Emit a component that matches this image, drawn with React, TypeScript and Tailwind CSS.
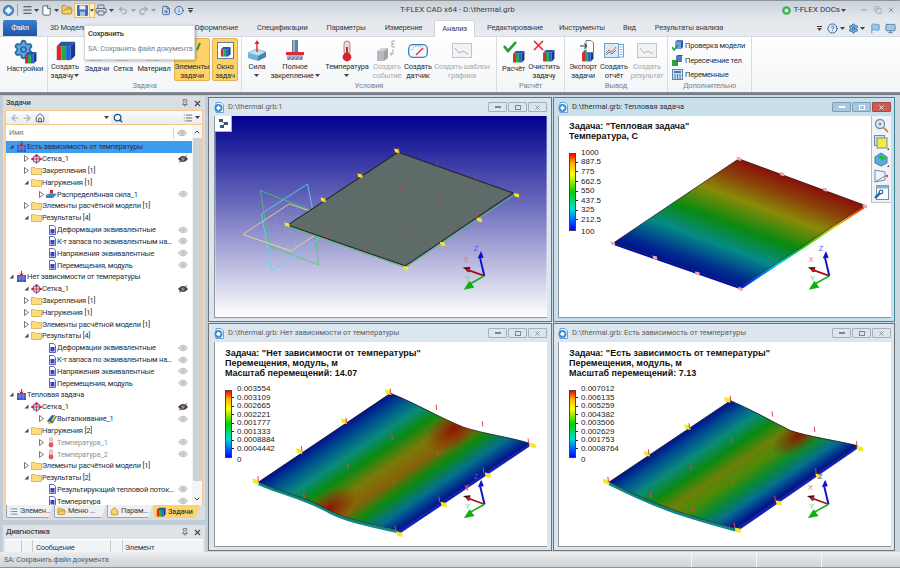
import React from "react";
import { Settings, File, FolderOpen, Printer, Undo2, Redo2, Info, FileSearch, Eye, Pin, X, Home, Search, ArrowLeft, ArrowRight, List, Menu, HelpCircle, Minus, Copy, Flag, Monitor, ChevronUp, ChevronDown } from "lucide-react";

const Caret = ({ className = "" }: { className?: string }) => (
  <svg width="5" height="3" viewBox="0 0 5 3" className={className}><polygon points="0,0 5,0 2.5,3" fill="#444" /></svg>
);

const Cube = ({ s = 22 }: { s?: number }) => (
  <svg width={s} height={s} viewBox="0 0 24 24">
    <polygon points="2,7 7,2 23,2 18,7" fill="#2a56a8" />
    <polygon points="18,7 23,2 23,18 18,23" fill="#173a80" />
    <rect x="2" y="7" width="5.4" height="16" fill="#e0242a" />
    <rect x="7.4" y="7" width="5.3" height="16" fill="#1fae3b" />
    <rect x="12.7" y="7" width="5.3" height="16" fill="#1f5fe0" />
  </svg>
);

const GearCube = () => (
  <div className="relative w-[24px] h-[25px]">
    <Settings size={21} fill="#6aa7dc" stroke="#2c6ea8" strokeWidth={2.2} />
    <div className="absolute right-0 bottom-0"><Cube s={13} /></div>
  </div>
);
const ForceIcon = () => (
  <svg width="20" height="22" viewBox="0 0 20 22">
    <polygon points="1,13 9,9 19,12 11,16" fill="#bfe0f2" stroke="#5a94b8" strokeWidth=".6" />
    <polygon points="1,13 11,16 11,21 1,18" fill="#6fb3d8" />
    <polygon points="11,16 19,12 19,17 11,21" fill="#3f86b4" />
    <line x1="10" y1="12" x2="10" y2="3" stroke="#e02030" strokeWidth="1.4" />
    <polygon points="7.5,4 10,0 12.5,4" fill="#e02030" />
  </svg>
);
const FixIcon = () => (
  <svg width="22" height="22" viewBox="0 0 22 22">
    <rect x="8" y="0" width="6" height="12" fill="#5f7f9c" />
    <rect x="9" y="0" width="2" height="12" fill="#9ab4c9" />
    <rect x="2" y="12" width="18" height="3" fill="#e02a3a" />
    <rect x="3" y="15" width="16" height="5" fill="#9fb2c2" />
    <path d="M4 20l2-3M8 20l2-3M12 20l2-3M16 20l2-3" stroke="#445" strokeWidth=".7" />
  </svg>
);
const ThermoIcon = ({ s = 22, faded = false }: { s?: number; faded?: boolean }) => (
  <svg width={s} height={s} viewBox="0 0 22 22" opacity={faded ? 0.55 : 1}>
    <rect x="8" y="1" width="6" height="14" rx="3" fill="#efd8d8" stroke="#9a6a6a" strokeWidth=".8" />
    <rect x="10" y="7" width="2" height="9" fill="#d0262c" />
    <circle cx="11" cy="17" r="4.4" fill="#d0262c" />
  </svg>
);
const EventIcon = () => (
  <svg width="22" height="22" viewBox="0 0 22 22">
    <polygon points="1,11 5,8 12,8 8,11" fill="#cfd3d6" />
    <polygon points="8,11 12,8 12,18 8,21" fill="#9ea3a8" />
    <rect x="1" y="11" width="7" height="10" fill="#b6babe" />
    <path d="M19 1h-3v6h3M16 4h2.5" stroke="#aaa" strokeWidth="1" fill="none" />
    <path d="M17 9v5h-3m1.5-1.6L14 14l1.5 1.6" stroke="#aaa" strokeWidth="1" fill="none" />
  </svg>
);
const GaugeIcon = () => (
  <svg width="20" height="14" viewBox="0 0 20 14">
    <rect x=".7" y=".7" width="18.6" height="12.6" rx="4" fill="#f2f8fc" stroke="#3f7fb0" strokeWidth="1.3" />
    <path d="M4 6a6.5 6.5 0 0 1 12 0" stroke="#3f7fb0" strokeDasharray="1 1.4" fill="none" />
    <line x1="8" y1="11" x2="15" y2="4" stroke="#d0262c" strokeWidth="1.1" />
  </svg>
);
const ChartIcon = ({ w = 20 }: { w?: number }) => (
  <svg width={w} height="15" viewBox="0 0 20 15">
    <rect x=".5" y=".5" width="19" height="14" fill="#f1f2f3" stroke="#c2c5c9" />
    <polyline points="3,5 7,10 11,8 16,11" stroke="#b0b4b9" fill="none" />
  </svg>
);
const ReportIcon = () => (
  <svg width="20" height="15" viewBox="0 0 20 15">
    <rect x=".5" y=".5" width="14" height="14" fill="#dbeaf7" stroke="#6fa3cf" />
    <polyline points="2,10 5,7 8,9 12,4" stroke="#e0602a" fill="none" />
    <polyline points="2,12 5,9 8,11 12,7" stroke="#3f7fb0" fill="none" />
    <rect x="14.5" y="1.5" width="5" height="12.5" fill="#fff" stroke="#6fa3cf" />
    <path d="M15.5 4h3M15.5 6.5h3M15.5 9h3M15.5 11.5h3" stroke="#6fa3cf" strokeWidth=".7" />
  </svg>
);
const CheckCube = ({ kind }: { kind: "ok" | "no" | "exp" }) => (
  <div className="relative w-[22px] h-[22px]">
    <div className="absolute right-0 bottom-0"><Cube s={13} /></div>
    {kind === "ok" && (
      <svg className="absolute left-0 top-0" width="14" height="12" viewBox="0 0 14 12"><polyline points="1,5 5,10 13,1" stroke="#1f9e2c" strokeWidth="2.6" fill="none" /></svg>
    )}
    {kind === "no" && (
      <svg className="absolute left-0 top-0" width="11" height="11" viewBox="0 0 11 11"><path d="M1 1l9 9M10 1l-9 9" stroke="#e0242a" strokeWidth="1.5" /></svg>
    )}
    {kind === "exp" && (
      <svg className="absolute right-0 top-0" width="14" height="13" viewBox="0 0 14 13">
        <path d="M6 .5h5l2.5 2.5v9.5H6z" fill="#fff" stroke="#6a7f96" />
        <path d="M0 6h6M4 3.5L7 6 4 8.500" stroke="#233" strokeWidth="1" fill="none" />
      </svg>
    )}
  </div>
);
const SmallCheck = () => (
  <svg width="11" height="11" viewBox="0 0 11 11">
    <polygon points="3,2 5,0 11,0 9,2" fill="#4a80c0" /><rect x="3" y="2" width="6" height="7" fill="#6fa3d8" /><polygon points="9,2 11,0 11,7 9,9" fill="#2a56a8" />
    <polyline points="0,7 2,10 6,5" stroke="#1f9e2c" strokeWidth="1.5" fill="none" />
  </svg>
);
const SmallIntersect = () => (
  <svg width="11" height="11" viewBox="0 0 11 11">
    <rect x="0" y="5" width="6" height="6" fill="#1fae3b" /><rect x="4" y="1" width="6" height="6" fill="#4a80c0" /><rect x="4" y="5" width="2" height="2" fill="#e0242a" /><polygon points="4,1 6,0 11,0 10,1" fill="#2a56a8" />
  </svg>
);
const SmallVars = () => (
  <svg width="11" height="11" viewBox="0 0 11 11">
    <rect x=".5" y=".5" width="10" height="10" fill="#cfdfee" stroke="#5a85ad" /><rect x="2" y="2" width="7" height="2" fill="#3f7fb0" /><path d="M3 5v5M5.500 5v5M8 5v5" stroke="#3f7fb0" />
  </svg>
);

type B = { w: string; icon?: React.ReactNode; a: string; b?: string; caret?: "inline" | "below"; off?: boolean; on?: boolean };
const RBtn = ({ w, icon, a, b, caret, off, on }: B) => (
  <div className={`${w} shrink-0 flex flex-col items-center ${on ? "bg-[#fdd367] border border-[#e7b04e] rounded-[2px]" : "border border-transparent"}`}>
    <div className="h-[25px] flex items-center justify-center">{icon}</div>
    <div className={`text-[7.500px] leading-[9px] text-center whitespace-nowrap ${off ? "text-[#a7abb0]" : "text-[#2a2f35]"}`}>
      <div>{a}</div>
      {b && (
        <div className="flex items-center justify-center gap-[1px]">
          {b}
          {caret === "inline" && <Caret />}
        </div>
      )}
      {caret === "below" && <div className="flex justify-center h-[9px] items-center"><Caret /></div>}
    </div>
  </div>
);
const Group = ({ w, label, pl, children }: { w: string; label?: string; pl?: string; children: React.ReactNode }) => (
  <div className={`${w} shrink-0 flex flex-col border-r border-[#d9dde1]`}>
    <div className={`h-[44px] pt-[1px] flex ${pl ?? ""}`}>{children}</div>
    <div className="h-[11px] text-[7.500px] leading-[10px] text-center text-[#7d848b]">{label}</div>
  </div>
);

const TopIcon = ({ children, w = "w-[10px]" }: { children: React.ReactNode; w?: string }) => (
  <div className={`${w} shrink-0 h-[14px] flex items-center justify-center`}>{children}</div>
);

const TitleBar = () => (
  <div className="h-[19px] shrink-0 flex items-center bg-gradient-to-b from-[#c9d1d9] to-[#e4e8ed] border-t border-[#8d9296] pl-[3px] pr-[5px] relative">
    <svg width="11" height="11" viewBox="0 0 11 11"><circle cx="5.500" cy="5.500" r="5" fill="#4f97d8" stroke="#2a6aa8" /><polygon points="5.500,2 9,5.500 5.500,9 2,5.500" fill="#fff" /></svg>
    <div className="w-px h-[12px] bg-[#9aa2aa] ml-[3px] mr-[4px]" />
    <TopIcon w="w-[11px]"><Menu size={12} color="#30465c" strokeWidth={2.4} /></TopIcon>
    <Caret className="ml-[1px] mr-[2px]" />
    <TopIcon w="w-[11px]"><File size={11} color="#4b5b6b" fill="#fff" /></TopIcon>
    <Caret className="ml-[2px] mr-[2px]" />
    <TopIcon w="w-[12px]"><FolderOpen size={12} color="#b88a26" fill="#f5cf6a" /></TopIcon>
    <div className="ml-[1px] flex h-[15px] items-center bg-[#fdf1c5] border border-[#e7c06a]">
      <div className="w-[14px] flex justify-center">
        <svg width="11" height="11" viewBox="0 0 11 11"><rect width="11" height="11" rx="1" fill="#3d6cc4" /><rect x="2.500" y="0.500" width="6" height="4" fill="#e6edf7" /><rect x="3" y="6.500" width="5" height="4.500" fill="#a8c0e6" /></svg>
      </div>
      <div className="w-[5px] h-full border-l border-[#e7c06a] flex items-center justify-center"><Caret /></div>
    </div>
    <TopIcon w="w-[12px]"><Printer size={12} color="#5c6c7c" /></TopIcon>
    <Caret className="ml-[2px] mr-[4px]" />
    <TopIcon w="w-[10px]"><Undo2 size={11} color="#9aa6b2" strokeWidth={2.6} /></TopIcon>
    <Caret className="ml-[3px] mr-[2px] opacity-40" />
    <TopIcon w="w-[11px]"><Redo2 size={11} color="#9aa6b2" strokeWidth={2.6} /></TopIcon>
    <Caret className="ml-[2px] mr-[5px] opacity-40" />
    <TopIcon w="w-[10px]"><FileSearch size={11} color="#2a5a98" /></TopIcon>
    <div className="ml-[3px]"><TopIcon w="w-[10px]"><Info size={11} color="#1f5fa8" /></TopIcon></div>
    <div className="ml-[4px] flex flex-col items-center gap-[1px]"><div className="w-[5px] h-px bg-[#333]" /><Caret /></div>
    <div className="flex-1 text-center text-[8px] tracking-normal text-[#3b4046] pr-[60px]">T-FLEX CAD x64 - D:\thermal.grb</div>
    <svg width="9" height="9" viewBox="0 0 9 9"><circle cx="4.500" cy="4.500" r="4.300" fill="#35b54a" /><circle cx="4.500" cy="4.500" r="2" fill="#e4f5e6" /></svg>
    <span className="ml-[3px] text-[8px] tracking-normal text-[#30363c]">T-FLEX DOCs</span>
    <Caret className="ml-[1px] mr-[14px]" />
    <Minus size={8} color="#8f969c" strokeWidth={3} />
    <Copy size={8} color="#8f969c" className="ml-[6px]" />
    <X size={8} color="#8f969c" className="ml-[5px]" strokeWidth={3} />
  </div>
);

const tabs = ["Спецификации", "Параметры", "Измерение"];
const TabsRow = () => (
  <div className="h-[17px] shrink-0 flex items-end bg-gradient-to-b from-[#e4e8ed] to-[#e8ecf1] pl-[3px] pr-[4px] text-[7.500px] text-[#3a4047] relative">
    <div className="w-[34px] h-[16px] bg-gradient-to-b from-[#3a7fd0] to-[#1f55a8] text-white text-center leading-[15px] rounded-t-[2px]">Файл</div>
    <div className="flex items-center gap-[19px] h-[16px] ml-[13px] whitespace-nowrap">
      <span className="w-[40px]">3D Модель</span>
      <span className="w-[60px]" />
      <span className="w-[50px] text-right">Оформление</span>
      {tabs.map((t) => <span key={t}>{t}</span>)}
      <span className="h-[17px] -mx-[7px] px-[7px] bg-white border border-b-0 border-[#cfd4d9] leading-[16px] rounded-t-[2px]">Анализ</span>
      <span>Редактирование</span>
      <span className="-ml-[3px]">Инструменты</span>
      <span className="-ml-[1px]">Вид</span>
      <span>Результаты анализа</span>
    </div>
    <div className="flex-1" />
    <div className="h-[16px] flex items-center">
      <div className="flex flex-col items-center gap-[1px]"><div className="w-[5px] h-px bg-[#333]" /><Caret /></div>
      <HelpCircle size={11} color="#1f5fa8" className="ml-[5px]" />
      <Caret className="ml-[2px] mr-[3px]" />
      <Settings size={11} color="#2a6aa8" fill="#7db3e0" />
      <Caret className="ml-[1px] mr-[5px]" />
      <Flag size={11} color="#4f97d8" fill="#9cc7ea" />
      <Monitor size={11} color="#4f7fa8" fill="#a8c7e0" className="ml-[4px]" />
    </div>
  </div>
);

const Ribbon = () => (
  <div className="h-[56px] shrink-0 flex bg-gradient-to-b from-white to-[#f3f5f8] pl-[3px] border-t border-[#d4d9de]">
    <Group w="w-[45px]">
      <RBtn w="w-[44px]" a="Настройки" icon={<GearCube />} />
    </Group>
    <Group w="w-[194px]" label="Задача">
      <RBtn w="w-[34px]" a="Создать" b="задачу" caret="inline" icon={<Cube s={21} />} />
      <RBtn w="w-[30px]" a="Задачи" icon={<Cube s={18} />} />
      <RBtn w="w-[22px]" a="Сетка" icon={<Cube s={18} />} />
      <RBtn w="w-[40px]" a="Материал" icon={<Cube s={18} />} />
      <RBtn w="w-[36px]" on a="Элементы" b="задачи" icon={<svg width="26" height="22" viewBox="0 0 26 22"><path d="M18 10l3-7" stroke="#2f9e3c" strokeWidth="2" /></svg>} />
      <div className="w-[2px] shrink-0" />
      <RBtn w="w-[26px]" on a="Окно" b="задач" icon={
        <div className="w-[17px] h-[17px] bg-white border border-[#5a7fa8] flex items-end justify-center pb-[1px]"><Cube s={11} /></div>
      } />
    </Group>
    <Group w="w-[255px]" label="Условия">
      <RBtn w="w-[30px]" a="Сила" caret="below" icon={<ForceIcon />} />
      <RBtn w="w-[46px]" a="Полное" b="закрепление" caret="inline" icon={<FixIcon />} />
      <div className="w-[4px] shrink-0" />
      <RBtn w="w-[50px]" a="Температура" caret="below" icon={<ThermoIcon />} />
      <RBtn w="w-[30px]" off a="Создать" b="событие" icon={<EventIcon />} />
      <RBtn w="w-[32px]" a="Создать" b="датчик" icon={<GaugeIcon />} />
      <RBtn w="w-[56px]" off a="Создать шаблон" b="графика" icon={<ChartIcon />} />
    </Group>
    <Group w="w-[68px]" label="Расчёт">
      <RBtn w="w-[33px]" a="Расчёт" icon={<CheckCube kind="ok" />} />
      <RBtn w="w-[28px]" a="Очистить" b="задачу" icon={<CheckCube kind="no" />} />
    </Group>
    <Group w="w-[103px]" pl="pl-[3px]" label="Вывод">
      <RBtn w="w-[30px]" a="Экспорт" b="задачи" icon={<CheckCube kind="exp" />} />
      <RBtn w="w-[32px]" a="Создать" b="отчёт" icon={<ReportIcon />} />
      <RBtn w="w-[34px]" off a="Создать" b="результат" icon={<ChartIcon />} />
    </Group>
    <Group w="w-[84px]" label="Дополнительно">
      <div className="pl-[4px] pt-[2px] flex flex-col gap-[3.500px] text-[7.500px] leading-[11px] text-[#2a2f35] whitespace-nowrap">
        {[[<SmallCheck />, "Проверка модели"], [<SmallIntersect />, "Пересечение тел"], [<SmallVars />, "Переменные"]].map(([ic, t], i) => (
          <div key={i} className="flex items-center gap-[2px]"><span className="w-[11px] flex">{ic}</span>{t}</div>
        ))}
      </div>
    </Group>
  </div>
);

const Tooltip = () => (
  <div className="absolute left-[84px] top-[25px] w-[111px] h-[35px] bg-white border border-[#d8dbde] shadow-[1px_1px_3px_rgba(0,0,0,.3)] z-20 px-[3px] pt-[3px] text-[7.500px] leading-[10px] whitespace-nowrap">
    <div className="text-[#333] font-medium">Сохранить</div>
    <div className="mt-[5px] text-[#7d838a]">SA: Сохранить файл документа</div>
  </div>
);

type K = "root" | "mesh" | "folder" | "force" | "doc" | "thermo" | "extrude";
type R = { l: 0 | 1 | 2 | 3; k: K; t: string; arrow?: "open" | "closed"; eye?: "on" | "off"; sel?: boolean; dim?: boolean };

const TreeIcon = ({ k }: { k: K }) => {
  if (k === "folder") return <svg width="11" height="9" viewBox="0 0 11 9"><path d="M.5 1.500h3.500l1 1h5.500v6H.5z" fill="#fbdc80" stroke="#cfa33f" strokeWidth=".7" /></svg>;
  if (k === "doc") return <svg width="7" height="10" viewBox="0 0 7 10" className="ml-[3px]"><path d="M.5.5h4l2 2v7h-6z" fill="#fff" stroke="#3b3fb0" strokeWidth=".8" /><rect x="1.500" y="4" width="4" height="4.500" fill="#3b3fc8" /></svg>;
  if (k === "mesh") return <svg width="11" height="10" viewBox="0 0 11 10"><circle cx="5.500" cy="5" r="3.600" fill="#bcd0f0" stroke="#2a3fc0" strokeWidth=".8" /><path d="M0 5h11M5.500 0v10" stroke="#d02030" strokeWidth=".7" /><circle cx="5.500" cy="1.500" r="1.200" fill="#d02030" /><circle cx="1.500" cy="5" r="1.200" fill="#d02030" /><circle cx="9.500" cy="5" r="1.200" fill="#d02030" /></svg>;
  if (k === "force") return <svg width="11" height="10" viewBox="0 0 11 10"><polygon points="0,6 5,4 11,5 7,9 0,9" fill="#3f86c8" /><rect x="4" y="1" width="3" height="3" fill="#d02030" /></svg>;
  if (k === "extrude") return <svg width="11" height="10" viewBox="0 0 11 10"><polygon points="1,7 6,1 11,2 7,9 3,10" fill="#2a5fc0" /><polygon points="1,7 7,9 3,10" fill="#f0d020" /><polygon points="8,2 10,2 7,7 5,7" fill="#f0d020" /></svg>;
  if (k === "thermo") return <svg width="10" height="11" viewBox="0 0 10 11"><rect x="3.500" y="0.500" width="3" height="7" rx="1.500" fill="#f0d0d0" stroke="#c08080" strokeWidth=".5" /><circle cx="5" cy="8" r="2.400" fill="#d85a60" /></svg>;
  return <svg width="11" height="11" viewBox="0 0 11 11"><rect x="1" y="4" width="9" height="7" fill="#3f4fc0" /><path d="M1 6h9M1 8h9M4 4v7M7 4v7" stroke="#9fb0f0" strokeWidth=".5" /><path d="M5.500 0v4M3.800 2.500L5.500 5l1.700-2.500" stroke="#d02030" strokeWidth="1" fill="none" /></svg>;
};

const Arrow = ({ a }: { a?: "open" | "closed" }) => {
  if (a === "closed") return <svg width="5" height="7" viewBox="0 0 5 7"><polygon points=".5,.5 4.500,3.500 .5,6.500" fill="#fff" stroke="#555" strokeWidth=".8" /></svg>;
  if (a === "open") return <svg width="5" height="5" viewBox="0 0 5 5"><polygon points="4.500,.5 4.500,4.500 .5,4.500" fill="#444" /></svg>;
  return null;
};

const EyeI = ({ v }: { v?: "on" | "off" }) => {
  if (v === "on") return <Eye size={10} color="#aab0b6" fill="#d8dbde" strokeWidth={1.6} />;
  if (v === "off")
    return (
      <svg width="10" height="10" viewBox="0 0 10 10"><path d="M0 5c3-4 7-4 10 0-3 4-7 4-10 0z" fill="#444" /><circle cx="5" cy="5" r="1.500" fill="#bbb" /><line x1="1" y1="8.500" x2="9" y2="1.500" stroke="#e02030" strokeWidth="1" /></svg>
    );
  return null;
};

const results = (a: string[]): R[] => a.map((t) => ({ l: 3, k: "doc", t, eye: "on" }));
const four = ["Деформации эквивалентные", "К-т запаса по эквивалентным напряжениям", "Напряжения эквивалентные", "Перемещения, модуль"];
const rows: R[] = [
  { l: 0, k: "root", t: "Есть зависимость от температуры", arrow: "open", sel: true },
  { l: 1, k: "mesh", t: "Сетка_1", arrow: "closed", eye: "off" },
  { l: 1, k: "folder", t: "Закрепления [1]", arrow: "closed" },
  { l: 1, k: "folder", t: "Нагружения [1]", arrow: "open" },
  { l: 2, k: "force", t: "Распределённая сила_1", arrow: "closed", eye: "on" },
  { l: 1, k: "folder", t: "Элементы расчётной модели [1]", arrow: "closed" },
  { l: 1, k: "folder", t: "Результаты [4]", arrow: "open" },
  ...results(four),
  { l: 0, k: "root", t: "Нет зависимости от температуры", arrow: "open" },
  { l: 1, k: "mesh", t: "Сетка_1", arrow: "open", eye: "off" },
  { l: 1, k: "folder", t: "Закрепления [1]", arrow: "closed" },
  { l: 1, k: "folder", t: "Нагружения [1]", arrow: "closed" },
  { l: 1, k: "folder", t: "Элементы расчётной модели [1]", arrow: "closed" },
  { l: 1, k: "folder", t: "Результаты [4]", arrow: "open" },
  ...results(four),
  { l: 0, k: "root", t: "Тепловая задача", arrow: "open" },
  { l: 1, k: "mesh", t: "Сетка_1", arrow: "open", eye: "off" },
  { l: 2, k: "extrude", t: "Выталкивание_1", arrow: "closed", eye: "on" },
  { l: 1, k: "folder", t: "Нагружения [2]", arrow: "open" },
  { l: 2, k: "thermo", t: "Температура_1", arrow: "closed", eye: "on", dim: true },
  { l: 2, k: "thermo", t: "Температура_2", arrow: "closed", eye: "on", dim: true },
  { l: 1, k: "folder", t: "Элементы расчётной модели [1]", arrow: "closed" },
  { l: 1, k: "folder", t: "Результаты [2]", arrow: "open" },
  ...results(["Результирующий тепловой поток, модуль", "Температура"]),
];
const pad = ["pl-[3px]", "pl-[18px]", "pl-[33px]", "pl-[33px]"];

const TreeRow = ({ r }: { r: R }) => (
  <div className={`h-[11.820px] flex items-center pr-[4px] ${pad[r.l]} ${r.sel ? "bg-[#3d9cf0]" : ""}`}>
    <div className="w-[5px] mr-[2px] flex justify-center shrink-0"><Arrow a={r.arrow} /></div>
    <div className="w-[11px] shrink-0 flex items-center"><TreeIcon k={r.k} /></div>
    <div className={`flex-1 min-w-0 truncate text-[7.500px] leading-[11px] ${r.dim ? "text-[#8f959b]" : "text-[#2a2f35]"}`}>{r.t}</div>
    <div className="w-[10px] ml-[3px] shrink-0 flex"><EyeI v={r.eye} /></div>
  </div>
);

const PanelHead = ({ t }: { t: string }) => (
  <div className="h-[14px] shrink-0 flex items-center px-[3px] text-[7.500px] font-medium text-[#3a4047]">
    <span className="flex-1">{t}</span>
    <Pin size={8} color="#444" className="mr-[4px]" />
    <X size={9} color="#444" strokeWidth={3} />
  </div>
);

const TasksPanel = () => (
  <div className="mt-[1px] h-[424px] shrink-0 flex flex-col bg-[#d9dee3]">
    <PanelHead t="Задачи" />
    <div className="flex-1 min-h-0 mx-[1px] border-x-2 border-[#f8cf98] flex flex-col">
      <div className="h-[15px] shrink-0 flex items-center bg-gradient-to-b from-[#fafbfc] to-[#e9ecef] border-y border-[#f8c888] pl-[4px] pr-[2px] gap-[2px]">
        <ArrowLeft size={10} color="#aab4be" strokeWidth={3} />
        <ArrowRight size={10} color="#aab4be" strokeWidth={3} />
        <Home size={10} color="#30465c" className="ml-[1px]" />
        <div className="ml-[2px] w-[62px] h-[12px] bg-white flex items-center justify-end pr-[2px]"><Caret /></div>
        <Search size={10} color="#1f4f88" strokeWidth={3} />
        <div className="flex-1" />
        <List size={10} color="#555" /><Caret />
      </div>
      <div className="flex-1 min-h-0 flex bg-white">
        <div className="flex-1 min-w-0 flex flex-col">
          <div className="h-[16px] shrink-0 flex items-center pl-[3px] pr-[5px] text-[7.500px] text-[#7d838a]">
            <span className="flex-1">Имя</span>
            <div className="w-px h-[12px] bg-[#d6d9dc] mr-[3px]" />
            <Eye size={10} color="#aab0b6" fill="#d8dbde" />
          </div>
          <div className="flex-1 min-h-0 overflow-hidden">
            {rows.map((r, i) => <TreeRow key={i} r={r} />)}
          </div>
        </div>
        <div className="w-[10px] shrink-0 flex flex-col bg-[#f4f5f6] items-center">
          <ChevronUp size={8} color="#444" strokeWidth={3} className="mt-[3px] mb-[2px]" />
          <div className="w-[9px] h-[343px] bg-[#cdd1d5] rounded-[1px]" />
          <div className="flex-1" />
          <ChevronDown size={8} color="#444" strokeWidth={3} className="mb-[2px]" />
        </div>
      </div>
    </div>
    <div className="h-[15px] shrink-0 flex items-start gap-[1px] pl-[3px] text-[7.500px] text-[#3a4047] whitespace-nowrap">
      {[
        ["w-[47px]", "Элемен...", <List size={9} color="#3f6f9f" />],
        ["w-[52px]", "Меню ...", <FolderOpen size={9} color="#b88a26" fill="#f5cf6a" />],
        ["w-[46px]", "Парам...", <Home size={9} color="#b88a26" fill="#f5cf6a" />],
      ].map(([w, t, ic], i) => (
        <div key={i} className={`${w} h-[13px] flex items-center gap-[2px] pl-[2px] bg-[#eef0f3] border-b border-l border-[#9aa2aa] rounded-bl-[2px] [clip-path:polygon(0_0,100%_0,calc(100%-5px)_100%,0_100%)]`}>{ic}{t}</div>
      ))}
      <div className="w-[46px] h-[13px] flex items-center gap-[2px] pl-[2px] bg-[#fdd367] font-medium rounded-bl-[2px] [clip-path:polygon(0_0,100%_0,calc(100%-5px)_100%,0_100%)]"><Cube s={10} />Задачи</div>
    </div>
  </div>
);

const Diagnostics = () => (
  <div className="mt-[5px] flex-1 min-h-0 overflow-hidden bg-[#dfe3e7] flex flex-col">
    <PanelHead t="Диагностика" />
    <div className="h-[13px] shrink-0 mx-[2px] flex bg-[#f1f3f5] text-[7.500px] leading-[15px] text-[#3a4047] border-t border-[#fff]">
      <div className="w-[17px] border-r border-[#c4c9ce]" />
      <div className="w-[11px] border-r border-[#c4c9ce]" />
      <div className="w-[78px] border-r border-[#c4c9ce] pl-[3px]">Сообщение</div>
      <div className="w-[12px] border-r border-[#c4c9ce]" />
      <div className="flex-1 pl-[2px]">Элемент</div>
    </div>
  </div>
);

const WinBtn = ({ kind, active }: { kind: "min" | "max" | "close"; active?: boolean }) => {
  const bg = active ? (kind === "close" ? "bg-[#cf5a52] border-[#a84840]" : "bg-[#a9c8de] border-[#7f9fb8]") : "bg-[#dde5ec] border-[#a5b0ba]";
  const c = active ? "#fff" : "#7d878f";
  return (
    <div className={`w-[19px] h-[10px] border ${bg} rounded-[1px] flex items-center justify-center`}>
      {kind === "min" && <div className="w-[6px] h-[2px] border" style={{ borderColor: c }} />}
      {kind === "max" && <div className="w-[6px] h-[5px] border" style={{ borderColor: c }} />}
      {kind === "close" && <X size={7} color={c} strokeWidth={3} />}
    </div>
  );
};

const DocBadge = () => (
  <svg width="10" height="11" viewBox="0 0 10 11" className="shrink-0"><path d="M2 .5h5l2.500 2.500v7.500H2z" fill="#fff" stroke="#6fa3d8" /><circle cx="4.500" cy="6" r="4" fill="#3d8cd8" /><polygon points="4.500,3.500 7,6 4.500,8.500 2,6" fill="#fff" /></svg>
);

const MdiWindow = ({ title, active, pad, children }: { title: string; active?: boolean; pad: string; children: React.ReactNode }) => (
  <div className={`min-h-0 flex flex-col border ${active ? "border-[#3f8796] bg-[#c8dfec]" : "border-[#6d7378] bg-[#dbe6ef]"}`}>
    <div className={`h-[18px] shrink-0 flex items-center gap-[2px] ${pad}`}>
      <DocBadge />
      <span className={`flex-1 text-[7.500px] tracking-normal pl-[2px] truncate ${active ? "text-[#2c3238]" : "text-[#5a6066]"}`}>{title}</span>
      <div className="flex gap-[1px]">
        <WinBtn kind="min" active={active} />
        <WinBtn kind="max" active={active} />
        <WinBtn kind="close" active={active} />
      </div>
    </div>
    <div className={`flex-1 min-h-0 flex pb-[3px] ${pad}`}>
      <div className="relative flex-1 min-w-0 bg-white border-l border-b border-[#8f969c] overflow-hidden">{children}</div>
    </div>
  </div>
);

const Axes = ({ x, y, zy = 470 }: { x: number; y: number; zy?: number }) => (
  <g>
    <line x1={x} y1={y} x2={x - 13} y2={zy + 20} stroke="#1010d0" strokeWidth="6" />
    <polygon points={`${x - 20},${zy + 22} ${x - 10},${zy} ${x - 2},${zy + 20}`} fill="#1010d0" />
    <line x1={x} y1={y} x2={x - 50} y2={y - 18} stroke="#a01018" strokeWidth="5" />
    <polygon points={`${x - 46},${y - 12} ${x - 65},${y - 25} ${x - 42},${y - 27}`} fill="#301010" />
    <circle cx={x - 48} cy={y - 17} r="6" fill="#d01018" />
    <line x1={x} y1={y} x2={x - 45} y2={y + 25} stroke="#10b010" strokeWidth="5" />
    <polygon points={`${x - 45},${y + 15} ${x - 62},${y + 42} ${x - 30},${y + 35}`} fill="#10b010" />
    <text x={x - 32} y={zy - 1} fontSize="22" fill="#5058f0" fontFamily="Liberation Sans">Z</text>
    <text x={x - 62} y={y - 42} fontSize="22" fill="#ef6a70" fontFamily="Liberation Sans">X</text>
    <text x={x - 58} y={y + 14} fontSize="22" fill="#60d870" fontFamily="Liberation Sans">Y</text>
  </g>
);

type P = [number, number];
const Diamonds = ({ pts, fill = "#f4e820", s = 1 }: { pts: P[]; fill?: string; s?: number }) => (
  <g>
    {pts.map(([x, y], i) => (
      <polygon key={i} points={`${x - 8 * s},${y - 7 * s} ${x + 7 * s},${y - 4 * s} ${x + 8 * s},${y + 7 * s} ${x - 5 * s},${y + 4 * s}`} fill={fill} />
    ))}
  </g>
);
const Ticks = ({ pts, w = 3, c = "#e04050" }: { pts: P[]; w?: number; c?: string }) => (
  <g>
    {pts.map(([x, y], i) => <line key={i} x1={x - 1} y1={y - 8} x2={x + 1} y2={y + 8} stroke={c} strokeWidth={w} />)}
  </g>
);

const Model = () => (
  <svg viewBox="27 63 999 606" className="absolute inset-0 w-full h-full">
    <defs>
      <linearGradient id="sky" x1="0" y1="0" x2="0" y2="1">
        <stop offset="0" stopColor="#00008e" /><stop offset=".45" stopColor="#6e6ebd" /><stop offset="1" stopColor="#ffffff" />
      </linearGradient>
    </defs>
    <rect x="27" y="63" width="999" height="606" fill="url(#sky)" />
    <polygon points="163,288 322,350 338,512 190,455" fill="none" stroke="#3fd060" strokeWidth="2.500" />
    <polygon points="305,268 338,435 198,530 166,358" fill="none" stroke="#4fdcf0" strokeWidth="2.500" />
    <polygon points="250,328 395,378 255,470 110,420" fill="none" stroke="#f0e080" strokeWidth="2.500" />
    <g stroke="#7fd8b0" strokeWidth="2" strokeDasharray="2 10" fill="none" opacity=".8">
      <path d="M200 310l25 170M225 320l25 170M250 330l25 170M275 340l25 170M190 360l130 50M190 385l130 50M190 410l130 50M190 435l130 50" />
    </g>
    <polygon points="245,392 578,172 925,295 600,515" fill="#5f6b68" stroke="#25282c" strokeWidth="3.500" />
    <polyline points="248,396 600,520 930,300" fill="none" stroke="#38d048" strokeWidth="2.500" />
    <Diamonds pts={[[243, 391], [352, 316], [463, 243], [574, 168], [935, 302], [823, 376], [712, 449], [601, 522]]} />
    <Ticks pts={[[469, 238], [358, 311], [696, 206], [810, 247], [584, 280], [699, 321], [474, 352], [589, 395], [362, 425], [477, 466], [815, 362], [704, 435], [593, 508], [925, 287], [580, 165]]} w={2} c="#c84050" />
    <Axes x={838} y={545} />
  </svg>
);

const Thermal = () => (
  <svg viewBox="24 63 999 606" className="absolute inset-0 w-full h-full">
    <defs>
      <linearGradient id="th" gradientUnits="userSpaceOnUse" x1="188" y1="445" x2="318" y2="95">
        <stop offset="0" stopColor="#00108e" /><stop offset=".1" stopColor="#00308e" /><stop offset=".28" stopColor="#058a88" /><stop offset=".47" stopColor="#0a8a10" /><stop offset=".68" stopColor="#8a8a08" /><stop offset=".85" stopColor="#8a4008" /><stop offset="1" stopColor="#8a0c08" />
      </linearGradient>
      <linearGradient id="ths" gradientUnits="userSpaceOnUse" x1="570" y1="585" x2="945" y2="335">
        <stop offset="0" stopColor="#0010ff" /><stop offset=".3" stopColor="#00d0e0" /><stop offset=".5" stopColor="#10c010" /><stop offset=".75" stopColor="#e0d000" /><stop offset="1" stopColor="#ff2000" />
      </linearGradient>
    </defs>
    <polygon points="570,578 945,332 945,340 572,586" fill="url(#ths)" />
    <polygon points="188,445 570,578 572,586 188,452" fill="#0010b0" />
    <polygon points="188,445 565,192 945,332 570,578" fill="url(#th)" stroke="#101018" strokeWidth="2" />
    <Diamonds pts={[[185, 447], [312, 490], [440, 538], [570, 585], [945, 335], [825, 285], [695, 238], [565, 192]]} fill="#f0a8b8" s={.9} />
    <Axes x={838} y={545} />
  </svg>
);

const Deformed = ({ id, vb, path, strip, g, stops, spots, yellow, red, axes, lower }: {
  id: string; vb: string; path: string; strip: string; g: [number, number, number, number]; stops: [number, string][]; spots: [number, number, number, number][]; yellow: P[]; red: P[]; axes: P; lower: string;
}) => (
  <svg viewBox={vb} className="absolute inset-0 w-full h-full">
    <defs>
      <linearGradient id={id} gradientUnits="userSpaceOnUse" x1={g[0]} y1={g[1]} x2={g[2]} y2={g[3]}>
        {stops.map(([o, c]) => <stop key={o} offset={o} stopColor={c} />)}
      </linearGradient>
      <radialGradient id={`${id}r`}>
        <stop offset="0" stopColor="#8a1205" stopOpacity=".95" /><stop offset="1" stopColor="#8a1205" stopOpacity="0" />
      </radialGradient>
      <clipPath id={`${id}c`}><path d={path} /></clipPath>
    </defs>
    <path d={lower} fill="none" stroke="#0a8a88" strokeWidth="8" />
    <polygon points={strip} fill="#0a20d8" stroke="#08082a" strokeWidth="1.500" />
    <path d={path} fill={`url(#${id})`} stroke="#1a1a20" strokeWidth="2.500" />
    <g clipPath={`url(#${id}c)`}>
      {spots.map(([x, y, rx, ry], i) => <ellipse key={i} cx={x} cy={y} rx={rx} ry={ry} fill={`url(#${id}r)`} transform={`rotate(-34 ${x} ${y})`} />)}
    </g>
    <Diamonds pts={yellow} s={1.200} />
    <Ticks pts={red} />
    <Axes x={axes[0]} y={axes[1]} zy={478} />
  </svg>
);

const ramp = "bg-[linear-gradient(to_bottom,#ff0000,#ffb000_12%,#ffff00_27%,#00d000_50%,#00e0d0_72%,#0060ff_88%,#0000ff)]";

const Legend = ({ labels, tall }: { labels: string[]; tall?: boolean }) => (
  <div className={`absolute flex font-['Liberation_Sans',sans-serif] text-[8px] tracking-normal text-[#222] ${tall ? "left-[10px] top-[32px]" : "left-[10px] top-[43px]"}`}>
    <div className={`w-[7px] mt-[5px] border border-[#444] ${ramp} ${tall ? "h-[78px]" : "h-[68px]"}`} />
    <div className="flex flex-col">
      {labels.map((l, i) => (
        <div key={i} className={`flex items-center ${tall ? "h-[9.600px]" : "h-[8.500px]"} ${i === labels.length - 1 ? "mt-[2.500px]" : ""}`}>
          <div className={`w-[2px] h-px ${i === 0 || i === labels.length - 1 ? "" : "bg-[#222]"}`} />
          <span className="ml-[3px]">{l}</span>
        </div>
      ))}
    </div>
  </div>
);

const Head = ({ lines, cls }: { lines: string[]; cls: string }) => (
  <div className={`absolute ${cls} font-['Liberation_Sans',sans-serif] font-bold text-[9px] tracking-normal leading-[10px] text-[#111] whitespace-nowrap`}>
    {lines.map((l) => <div key={l}>{l}</div>)}
  </div>
);

const SideTools = () => (
  <div className="absolute right-0 top-0 w-[20px] bg-[#f1f3f5] border-l border-b border-[#b8bec4] flex flex-col items-center py-[2px] gap-[2px]">
    <svg width="15" height="15" viewBox="0 0 15 15"><circle cx="6" cy="6" r="4.500" fill="#e2ecf6" stroke="#6f8fb0" strokeWidth="1.300" /><circle cx="6" cy="6" r="1.500" fill="#6f8fb0" /><line x1="9.500" y1="9.500" x2="14" y2="14" stroke="#d89030" strokeWidth="2" /></svg>
    <svg width="15" height="15" viewBox="0 0 15 15"><rect x=".5" y=".5" width="10" height="10" fill="#cfdfee" stroke="#6f8fb0" /><rect x="3" y="3" width="10" height="10" fill="#f8e840" stroke="#6f8fb0" /><polygon points="15,13 15,15 13,15" fill="#333" /></svg>
    <svg width="15" height="15" viewBox="0 0 15 15"><polygon points="1,5 7,1 13,5 13,11 7,14 1,11" fill="#5fa8e0" stroke="#3f7fb0" /><polygon points="4,5 7,3 12,6 9,9" fill="#20c040" /><polygon points="15,13 15,15 13,15" fill="#333" /></svg>
    <svg width="15" height="14" viewBox="0 0 15 14"><polygon points="1,1 11,3 11,11 1,13" fill="#eef3f8" stroke="#6f8fb0" /><path d="M1 13l10-6" stroke="#6f8fb0" /><circle cx="13" cy="7" r="1.300" fill="#e04050" /></svg>
    <svg width="15" height="15" viewBox="0 0 15 15"><rect x="2.500" y=".5" width="12" height="14" fill="#fff" stroke="#6f8fb0" /><rect x="2.500" y=".5" width="12" height="3" fill="#8fb0d0" /><path d="M1 13l5-5" stroke="#2a6fb0" strokeWidth="2.500" /><circle cx="7" cy="7" r="1.800" fill="none" stroke="#2a6fb0" strokeWidth="1.300" /></svg>
  </div>
);

const yellowBL: P[] = [[148, 483], [280, 392], [415, 302], [548, 215], [983, 375], [848, 465], [715, 553], [582, 642]];
const redBL: P[] = [[555, 212], [422, 300], [288, 385], [157, 475], [970, 362], [835, 450], [702, 537], [570, 625], [693, 260], [832, 310], [560, 350], [698, 398], [427, 437], [565, 487], [295, 525], [432, 575], [785, 503]];
const yellowBR: P[] = [[165, 484], [288, 400], [410, 320], [530, 238], [930, 385], [805, 468], [685, 548], [562, 630]];
const redBR: P[] = [[540, 233], [416, 316], [294, 395], [172, 477], [920, 370], [797, 452], [674, 534], [552, 615], [666, 280], [793, 326], [544, 360], [670, 405], [421, 441], [548, 486], [300, 524], [426, 568]];

export default function App() {
  return (
    <div className="relative w-[900px] h-[568px] overflow-hidden flex flex-col bg-[#ccd8e2] font-['Roboto',sans-serif] tracking-[-0.2px]">
      <TitleBar />
      <TabsRow />
      <Ribbon />
      <div className="h-[3px] shrink-0 bg-gradient-to-b from-[#8a9098] to-[#6e7780]" />
      <div className="h-[457px] shrink-0 flex">
        <div className="w-[208px] shrink-0 pl-[3px] pr-[3px] bg-[#c2cdd7] flex flex-col">
          <TasksPanel />
          <Diagnostics />
        </div>
        <div className="flex-1 min-w-0 grid grid-cols-[344px_342px] grid-rows-[225px_228px] gap-[1px] pt-[2px] content-start">
          <MdiWindow title="D:\thermal.grb:1" pad="pl-[5px] pr-[4px]">
            <Model />
            <div className="absolute left-0 top-0 w-[17px] h-[16px] bg-white border-r border-b border-[#aab0b6] flex items-center justify-center">
              <svg width="11" height="11" viewBox="0 0 11 11"><rect x="1" y="1" width="4" height="3" fill="#2a5a88" /><rect x="6" y="4" width="4" height="3" fill="#2a5a88" /><rect x="2" y="7" width="4" height="3" fill="#2a5a88" /><path d="M4 4l3 1M5 7l2-1" stroke="#444" strokeWidth=".7" /></svg>
            </div>
          </MdiWindow>
          <MdiWindow title="D:\thermal.grb: Тепловая задача" active pad="pl-[4px] pr-[3px]">
            <Thermal />
            <Head cls="left-[10px] top-[5px]" lines={['Задача: "Тепловая задача"', "Температура, С"]} />
            <Legend tall labels={["1000", "887.5", "775", "662.5", "550", "437.5", "325", "212.5", "100"]} />
            <SideTools />
          </MdiWindow>
          <MdiWindow title="D:\thermal.grb: Нет зависимости от температуры" pad="pl-[5px] pr-[4px]">
            <Deformed
              id="bl" vb="27 69 999 603"
              path="M158 485 L555 218 C625 245 700 290 775 320 C835 340 915 350 972 368 L578 630 C520 615 440 605 370 570 C300 530 225 515 158 485 Z"
              strip="578,630 972,368 972,378 582,640"
              lower="M158 490 C225 520 300 535 370 575 C440 610 520 620 578 635"
              g={[555, 218, 754, 514]}
              stops={[[0, "#00128e"], [.13, "#005a8e"], [.24, "#0a8a7a"], [.36, "#0a8a12"], [.5, "#7a7a08"], [.62, "#8a6208"], [.74, "#0a8a12"], [.87, "#05708e"], [1, "#00128e"]]}
              spots={[[745, 325, 95, 55], [370, 565, 95, 50]]}
              yellow={yellowBL} red={redBL} axes={[838, 552]}
            />
            <Head cls="left-[10px] top-[6px]" lines={['Задача: "Нет зависимости от температуры"', "Перемещения, модуль, м", "Масштаб перемещений: 14.07"]} />
            <Legend labels={["0.003554", "0.003109", "0.002665", "0.002221", "0.001777", "0.001333", "0.0008884", "0.0004442", "0"]} />
          </MdiWindow>
          <MdiWindow title="D:\thermal.grb: Есть зависимость от температуры" pad="pl-[4px] pr-[3px]">
            <Deformed
              id="br" vb="24 69 999 603"
              path="M175 485 L540 240 C600 265 660 300 720 330 C780 350 860 360 920 375 L555 625 C500 610 430 590 370 570 C300 545 235 515 175 485 Z"
              strip="555,625 920,375 920,385 558,634"
              lower="M175 490 C235 520 300 550 370 575 C430 595 500 615 555 630"
              g={[540, 240, 720, 509]}
              stops={[[0, "#00128e"], [.13, "#005a8e"], [.24, "#0a8a7a"], [.38, "#0a8a12"], [.52, "#6e8008"], [.64, "#4a8a08"], [.75, "#0a8a30"], [.87, "#05708e"], [1, "#00128e"]]}
              spots={[[745, 345, 90, 45]]}
              yellow={yellowBR} red={redBR} axes={[835, 552]}
            />
            <Head cls="left-[10px] top-[6px]" lines={['Задача: "Есть зависимость от температуры"', "Перемещения, модуль, м", "Масштаб перемещений: 7.13"]} />
            <Legend labels={["0.007012", "0.006135", "0.005259", "0.004382", "0.003506", "0.002629", "0.001753", "0.0008764", "0"]} />
          </MdiWindow>
        </div>
      </div>
      <div className="flex-1 min-h-0 flex items-center bg-gradient-to-b from-[#ebedef] to-[#cfd2d6] border-b border-[#8d9296] pl-[4px] text-[7.500px] text-[#5a6066] relative">
        <span className="w-[687px]">SA: Сохранить файл документа</span>
        <div className="w-[65px] h-full border-l border-[#f6f7f8]" />
        <div className="w-[65px] h-full border-l border-[#f6f7f8]" />
        <div className="flex-1 h-full border-l border-[#f6f7f8]" />
      </div>
      <Tooltip />
    </div>
  );
}
